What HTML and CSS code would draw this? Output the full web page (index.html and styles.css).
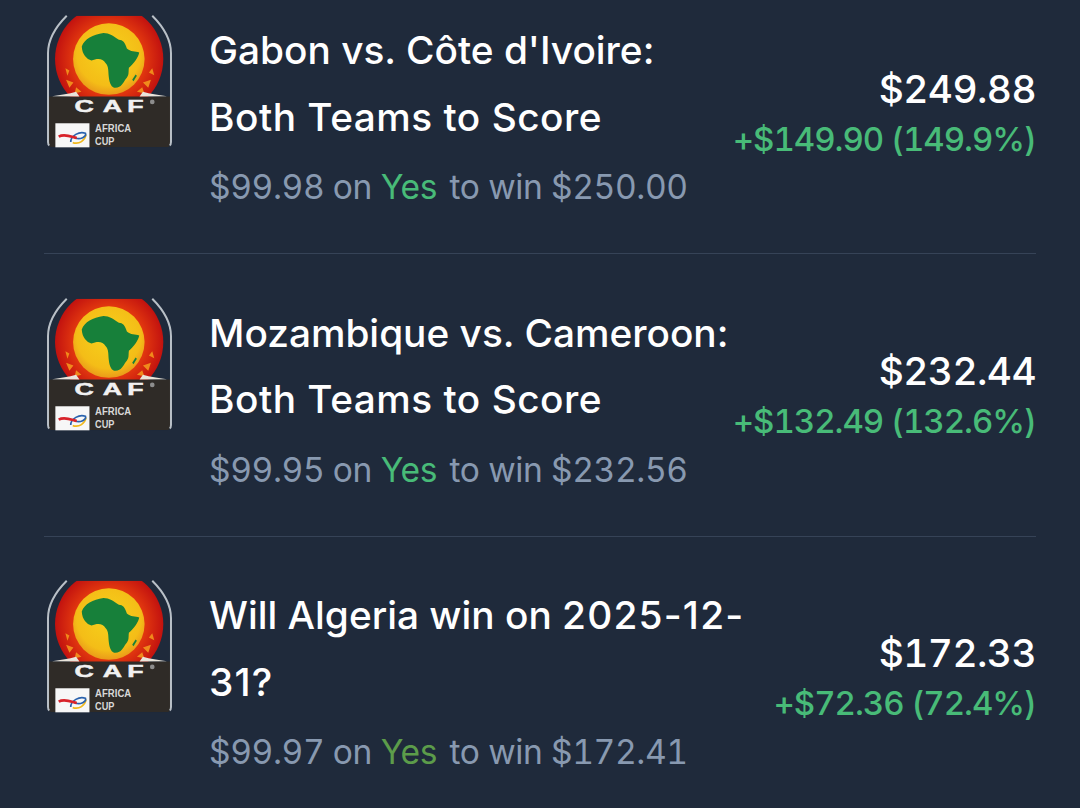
FILE: index.html
```html
<!DOCTYPE html>
<html lang="en">

<head>
     <meta charset="UTF-8" />
     <title>Positions</title>
     <meta name="viewport" content="width=device-width, initial-scale=1" />
     <link rel="stylesheet" href="styles.css">
</head>

<body>

     <svg class="defs" width="0" height="0">
          <defs>
               <radialGradient id="globe" cx="0.5" cy="0.42" r="0.6">
                    <stop offset="0" stop-color="#f6d21c" />
                    <stop offset="0.75" stop-color="#f4bd17" />
                    <stop offset="1" stop-color="#e8951a" />
               </radialGradient>
               <radialGradient id="ring" cx="0.5" cy="0.5" r="0.5">
                    <stop offset="0.65" stop-color="#e2380f" />
                    <stop offset="1" stop-color="#c2120f" />
               </radialGradient>
               <clipPath id="arch">
                    <path d="M58 430V160C58 115 85 75 115 48H365C395 75 422 115 422 160V430Q422 442 410 442H70Q58 442 58 430Z" />
               </clipPath>
               <symbol id="cafLogo" viewBox="48 40 384 410">
                    <g clip-path="url(#arch)">
                         <circle cx="239" cy="178" r="162" fill="url(#ring)" />
                         <path d="M58 290H422V442H58Z" fill="#2f2b27" />
                    </g>
                    <path d="M60 436Q56 434 56 426V160C56 115 82 78 112 48" fill="none" stroke="#b9c0c7" stroke-width="6" />
                    <path d="M420 436Q424 434 424 426V160C424 115 398 78 368 48" fill="none" stroke="#b9c0c7" stroke-width="6" />
                    <circle cx="238" cy="178" r="107" fill="url(#globe)" />
                    <path d="M157 140C165 118 190 105 222 100C240 100 252 110 268 120C280 120 286 128 292 146C302 156 318 154 329 158C324 178 312 190 298 204C296 218 300 226 288 238C280 250 276 262 258 264C246 264 240 250 238 232C236 214 238 200 228 190C220 174 202 176 186 182C172 178 158 164 157 140Z" fill="#17803a" />
                    <path d="M308 240L318 224L322 228L312 244Z" fill="#17803a" />
                    <path d="M108 205L120 212L114 228ZM110 240L132 248L120 264ZM140 262L156 276L136 280ZM368 205L374 226L358 218ZM340 248L364 240L356 264ZM322 276L338 262L344 280Z" fill="#f08a1c" />
                    <path d="M68 289C95 286 118 282 140 276L150 290ZM412 289C385 286 362 282 340 276L330 290Z" fill="#e9e4da" />
                    <text class="logo-caf" transform="translate(135 336) scale(1.6 1)" x="0 53 99">CAF</text>
                    <circle cx="368" cy="306" r="7" fill="#8d8d8d" />
                    <rect x="78" y="370" width="102" height="72" fill="#f7f7f7" />
                    <path d="M130 428C150 434 166 422 170 404" fill="none" stroke="#f0b81c" stroke-width="5" />
                    <path d="M124 426C124 406 150 394 168 400C172 410 152 420 138 414" fill="none" stroke="#2a62ad" stroke-width="5" />
                    <path d="M88 410C105 400 125 410 142 414" fill="none" stroke="#d8232a" stroke-width="8" />
                    <text class="logo-cup" x="197" y="397" textLength="108" lengthAdjust="spacingAndGlyphs">AFRICA</text>
                    <text class="logo-cup" x="197" y="434" textLength="58" lengthAdjust="spacingAndGlyphs">CUP</text>
               </symbol>
          </defs>
     </svg>

     <div class="list">
          <div class="row">
               <svg class="logo"><use href="#cafLogo" /></svg>
               <div class="info">
                    <div class="title">Gabon vs. Côte d'Ivoire: <span class="wide">Both Teams to Score</span></div>
                    <div class="sub">$99.98 on <span class="yes">Yes</span> to win $250.00</div>
               </div>
               <div class="value">
                    <div class="price">$249.88</div>
                    <div class="pnl">+$149.90 (149.9%)</div>
               </div>
          </div>

          <div class="row">
               <svg class="logo"><use href="#cafLogo" /></svg>
               <div class="info">
                    <div class="title">Mozambique vs. Cameroon: <span class="wide">Both Teams to Score</span></div>
                    <div class="sub">$99.95 on <span class="yes">Yes</span> to win $232.56</div>
               </div>
               <div class="value">
                    <div class="price">$232.44</div>
                    <div class="pnl">+$132.49 (132.6%)</div>
               </div>
          </div>

          <div class="row">
               <svg class="logo"><use href="#cafLogo" /></svg>
               <div class="info">
                    <div class="title">Will Algeria win on <span class="date">2025-12-</span><span class="date">31?</span></div>
                    <div class="sub">$99.97 on <span class="yes yes-dim">Yes</span> to win $172.41</div>
               </div>
               <div class="value">
                    <div class="price">$172.33</div>
                    <div class="pnl">+$72.36 (72.4%)</div>
               </div>
          </div>
     </div>

</body>

</html>
```

FILE: styles.css
```css
:root {
     --bg: #1f2a3b;
     --line: #364357;
     --muted: #8899b0;
     --green: #48bb78;
}

* {
     box-sizing: border-box;
     margin: 0;
     padding: 0;
}

body {
     font-family: Inter, 'Noto Sans', sans-serif;
     background: var(--bg);
     color: white;
}

.defs {
     display: block;
}

.list {
     padding: 13px 44px 0;
}

.row {
     display: flex;
     align-items: center;
     height: 241px;
     padding-bottom: 42px;
     border-bottom: 1.5px solid var(--line);
     margin-bottom: 41.5px;
}

.row:last-child {
     height: 197.5px;
     padding-bottom: 0;
     border-bottom: none;
     margin-bottom: 0;
}

.logo {
     flex: none;
     align-self: flex-start;
     width: 129px;
     height: 137px;
     margin-left: 1px;
     margin-right: 35px;
}

.logo-caf {
     font-family: 'Liberation Sans', sans-serif;
     font-weight: bold;
     font-size: 50px;
     fill: #f1f1f1;
     stroke: #f1f1f1;
     stroke-width: 1.5px;
}

.logo-cup {
     font-family: 'Liberation Sans', sans-serif;
     font-weight: bold;
     font-size: 33px;
     fill: #d8d8d8;
}

.info {
     flex: 1;
     min-width: 0;
     align-self: flex-start;
     padding-top: 4px;
}

.title {
     font-size: 38.8px;
     font-weight: 500;
     line-height: 66.5px;
}

.wide {
     letter-spacing: 0.5px;
}

.date {
     letter-spacing: 1.2px;
}

.sub {
     font-size: 33.6px;
     font-variant-numeric: tabular-nums;
     letter-spacing: -0.4px;
     line-height: 50px;
     margin-top: 12px;
     color: var(--muted);
}

.yes {
     color: var(--green);
     margin-right: 4px;
}

.yes-dim {
     color: #5c9c4a;
}

.value {
     flex: none;
     text-align: right;
     font-variant-numeric: tabular-nums;
     margin-top: 3px;
}

.price {
     font-size: 38.8px;
     font-weight: 500;
     letter-spacing: -0.57px;
     line-height: 51px;
}

.pnl {
     font-size: 33px;
     font-weight: 500;
     letter-spacing: -1px;
     line-height: 51px;
     color: var(--green);
}
```
